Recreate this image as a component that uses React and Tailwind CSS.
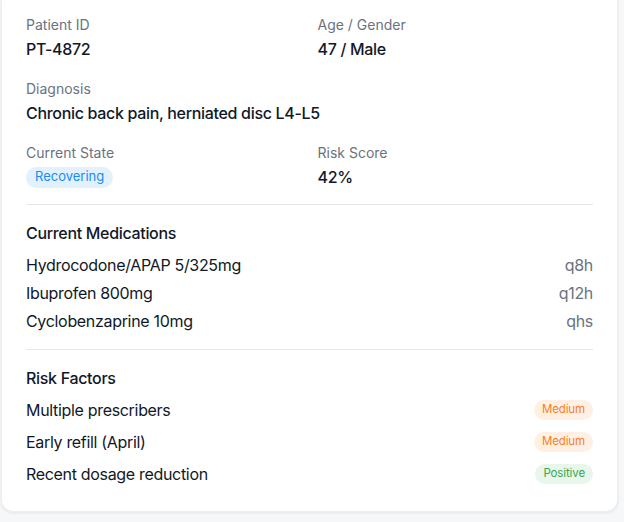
import React from "react";

const medications = [
  { name: "Hydrocodone/APAP 5/325mg", freq: "q8h" },
  { name: "Ibuprofen 800mg", freq: "q12h" },
  { name: "Cyclobenzaprine 10mg", freq: "qhs" },
];

const riskFactors = [
  { label: "Multiple prescribers", level: "Medium" },
  { label: "Early refill (April)", level: "Medium" },
  { label: "Recent dosage reduction", level: "Positive" },
];

function LevelBadge({ level }) {
  const styles =
    level === "Positive"
      ? "bg-[#e8f6ec] text-[#34a853]"
      : "bg-[#fff0e3] text-[#f7801f]";
  return (
    <span className={`inline-flex items-center h-5 px-2 rounded-full text-[11.5px] tracking-[-0.01em] ${styles}`}>
      {level}
    </span>
  );
}

function Field({ label, children }) {
  return (
    <div>
      <div className="text-sm leading-5 text-[#6b7280]">{label}</div>
      <div className="mt-0.5 h-6 flex items-center text-base font-medium tracking-[-0.02em] text-[#111827]">{children}</div>
    </div>
  );
}

export default function App() {
  return (
    <div
      className="min-h-screen bg-[#f6f7f9] pl-px pr-[6px] pb-[12px]"
      style={{ fontFamily: "Inter, 'Noto Sans', sans-serif" }}
    >
      <div className="bg-white rounded-b-xl shadow-[0_1px_3px_rgba(0,0,0,0.08)] border-x border-b border-[#eceef1] px-6 pt-[15px] pb-[25px]">
        {/* Patient summary */}
        <div className="grid grid-cols-2 gap-x-4 gap-y-[18px] pb-[15px] border-b border-[#e5e7eb]">
          <Field label="Patient ID">PT-4872</Field>
          <Field label="Age / Gender">47 / Male</Field>
          <div className="col-span-2">
            <Field label="Diagnosis">Chronic back pain, herniated disc L4-L5</Field>
          </div>
          <Field label="Current State">
            <span className="inline-flex items-center h-[21px] px-[9px] rounded-full bg-[#e1f1fd] text-[#1b8cf2] text-[13px] font-normal tracking-normal">
              Recovering
            </span>
          </Field>
          <Field label="Risk Score">42%</Field>
        </div>

        {/* Medications */}
        <div className="pt-4 pb-4 border-b border-[#e5e7eb]">
          <h3 className="text-base leading-6 font-medium tracking-[-0.02em] text-[#111827]">Current Medications</h3>
          <div className="mt-2 flex flex-col gap-1">
            {medications.map((m) => (
              <div key={m.name} className="flex items-center justify-between h-6 text-base tracking-[-0.02em]">
                <span className="text-[#111827]">{m.name}</span>
                <span className="text-[#6b7280]">{m.freq}</span>
              </div>
            ))}
          </div>
        </div>

        {/* Risk factors */}
        <div className="pt-4">
          <h3 className="text-base leading-6 font-medium tracking-[-0.02em] text-[#111827]">Risk Factors</h3>
          <div className="mt-2 flex flex-col gap-2">
            {riskFactors.map((r) => (
              <div key={r.label} className="flex items-center justify-between h-6 text-base tracking-[-0.02em]">
                <span className="text-[#111827]">{r.label}</span>
                <LevelBadge level={r.level} />
              </div>
            ))}
          </div>
        </div>
      </div>
    </div>
  );
}
